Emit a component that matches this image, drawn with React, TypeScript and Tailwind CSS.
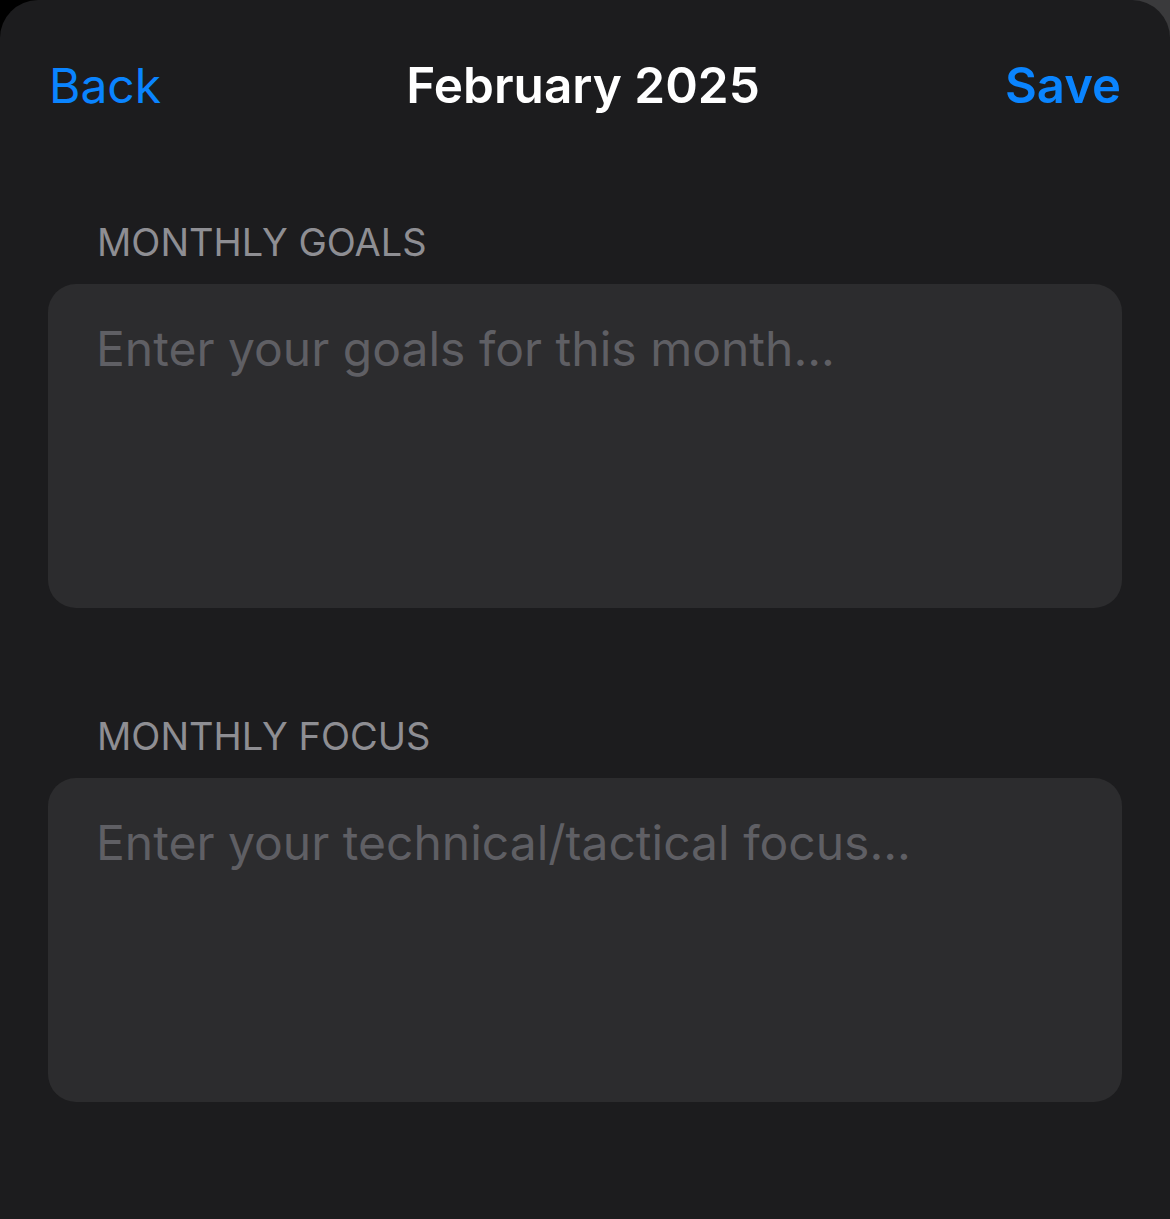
import React from "react";

function Field({ label, placeholder }: { label: string; placeholder: string }) {
  return (
    <div className="flex flex-col">
      <div className="pl-[97px] text-[38px] leading-[46px] text-[#8e8e93]">{label}</div>
      <div className="mx-[48px] mt-[19px] h-[324px] rounded-[28px] bg-[#2c2c2e]">
        <textarea
          className="w-full h-full resize-none bg-transparent outline-none pl-[48px] pr-[48px] pt-[36px] text-[48px] leading-[58px] text-white placeholder:text-[#5f5f64]"
          placeholder={placeholder}
        />
      </div>
    </div>
  );
}

export default function App() {
  return (
    <div
      className="w-[1170px] h-[1219px] bg-[linear-gradient(to_right,#000_50%,#3a3a3c_50%)]"
      style={{ fontFamily: "Inter, 'Noto Sans', sans-serif" }}
    >
      <div className="w-full h-full rounded-t-[38px] bg-[#1c1c1e] flex flex-col">
        <div className="flex items-center justify-between pl-[49px] pr-[49px] pt-[57px] h-[114px]">
          <span className="text-[48px] leading-none text-[#0a84ff]">Back</span>
          <span className="text-[49.5px] leading-none font-semibold text-white">February 2025</span>
          <span className="text-[49px] leading-none font-semibold text-[#0a84ff]">Save</span>
        </div>
        <div className="mt-[105px]">
          <Field label="MONTHLY GOALS" placeholder="Enter your goals for this month..." />
        </div>
        <div className="mt-[105px]">
          <Field label="MONTHLY FOCUS" placeholder="Enter your technical/tactical focus..." />
        </div>
      </div>
    </div>
  );
}
